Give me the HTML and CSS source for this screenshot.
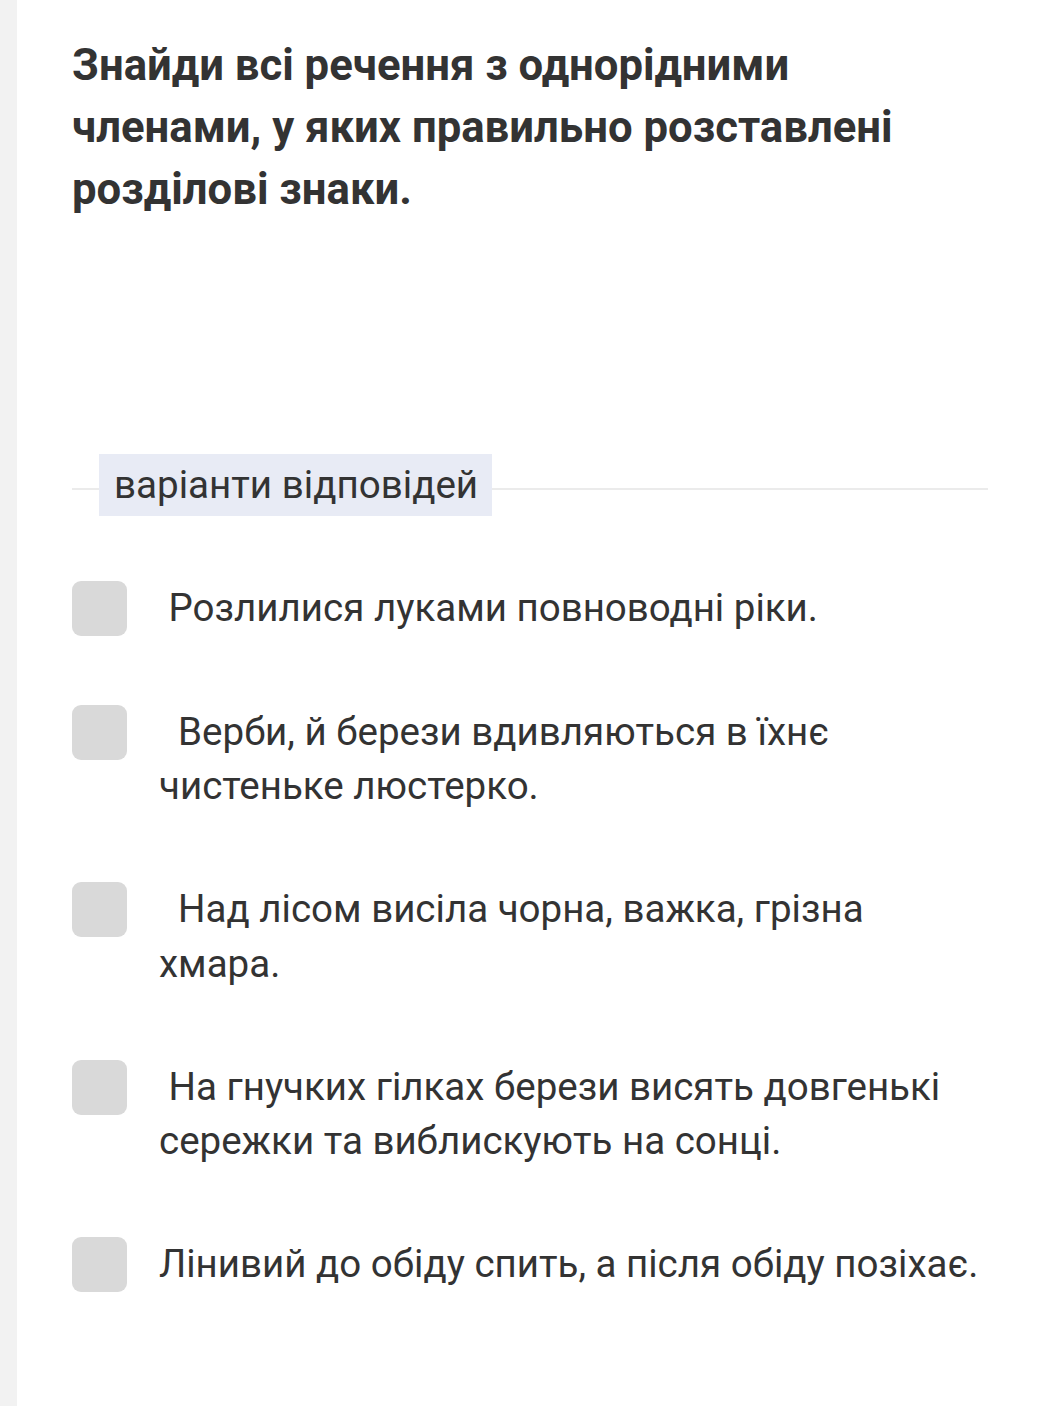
FILE: index.html
```html
<!DOCTYPE html>
<html lang="uk">
<head>
<meta charset="utf-8">
<link rel="stylesheet" href="styles.css">
</head>
<body>
<main class="panel">
  <h1 class="question">Знайди всі речення з однорідними членами, у яких правильно розставлені розділові знаки.</h1>
  <div class="divider"><span class="divider-label">варіанти відповідей</span></div>
  <ul class="options">
    <li class="option"><span class="box"></span><span class="text"> Розлилися луками повноводні ріки.</span></li>
    <li class="option"><span class="box"></span><span class="text">  Верби, й берези вдивляються в їхнє чистеньке люстерко.</span></li>
    <li class="option"><span class="box"></span><span class="text">  Над лісом висіла чорна, важка, грізна хмара.</span></li>
    <li class="option"><span class="box"></span><span class="text"> На гнучких гілках берези висять довгенькі сережки та виблискують на сонці.</span></li>
    <li class="option"><span class="box"></span><span class="text">Лінивий до обіду спить, а після обіду позіхає.</span></li>
  </ul>
</main>
</body>
</html>
```
FILE: styles.css
```css
html, body {
  margin: 0;
  padding: 0;
}
body {
  background: #f2f2f2;
  font-family: Roboto, "Noto Sans", sans-serif;
  color: #333333;
}
.panel {
  margin-left: 17px;
  min-height: 1406px;
  background: #ffffff;
  padding: 34px 52px 0 55px;
  box-sizing: border-box;
}
.question {
  margin: 0;
  font-size: 43.7px;
  line-height: 62px;
  font-weight: 700;
  color: #333333;
  max-width: 840px;
}
.divider {
  margin-top: 234px;
  position: relative;
  height: 62px;
  display: flex;
  align-items: center;
}
.divider::before {
  content: "";
  position: absolute;
  left: 0;
  right: 0;
  top: 34px;
  height: 2px;
  background: #ebebeb;
}
.divider-label {
  position: relative;
  margin-left: 27px;
  height: 62px;
  line-height: 62px;
  padding: 0 14px 0 15px;
  background: #e8ebf5;
  font-size: 38.6px;
  color: #333333;
}
.options {
  list-style: none;
  margin: 65px 0 0 0;
  padding: 0;
}
.option {
  display: flex;
  align-items: flex-start;
  margin-bottom: 68.5px;
}
.box {
  flex: none;
  width: 55px;
  height: 55px;
  border-radius: 9px;
  background: #d9d9d9;
  margin-right: 32px;
}
.text {
  white-space: pre-wrap;
  font-size: 38.5px;
  line-height: 54.5px;
  color: #333333;
}
```
